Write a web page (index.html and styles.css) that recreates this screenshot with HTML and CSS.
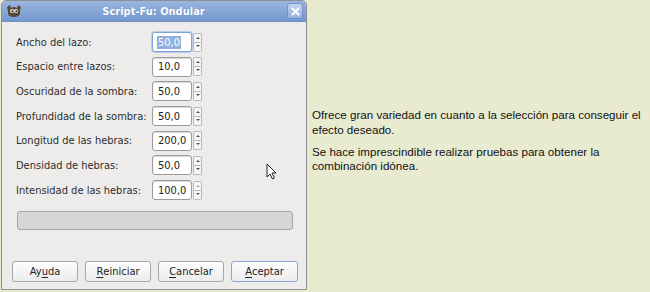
FILE: index.html
```html
<!DOCTYPE html>
<html>
<head>
<meta charset="utf-8">
<link rel="stylesheet" href="styles.css">
</head>
<body>
<div class="page">
  <div class="window">
    <div class="titlebar">
      <svg class="appicon" width="16" height="13" viewBox="0 0 16 13">
        <path d="M1 2 L4 0 L5 3 Q8 1 11 3 L12 0 L15 2 L14 6 Q15 12 8 12 Q1 12 2 6 Z" fill="#5b4a38"/>
        <circle cx="6" cy="6" r="2" fill="#e8e8e8"/>
        <circle cx="10" cy="6" r="2" fill="#e8e8e8"/>
        <circle cx="6.3" cy="6.2" r="0.9" fill="#222"/>
        <circle cx="10.3" cy="6.2" r="0.9" fill="#222"/>
      </svg>
      <div class="title">Script-Fu: Ondular</div>
      <div class="close">
        <svg width="9" height="9" viewBox="0 0 9 9"><path d="M1.5 1.5 L7.5 7.5 M7.5 1.5 L1.5 7.5" stroke="#fff" stroke-width="2" stroke-linecap="round"/></svg>
      </div>
    </div>
    <div class="body">
      <div class="form">
        <div class="row"><span class="label">Ancho del lazo:</span><div class="spin"><div class="entry focus"><span class="sel">50,0</span></div><div class="arrows"><span class="up"></span><span class="down"></span></div></div></div>
        <div class="row"><span class="label">Espacio entre lazos:</span><div class="spin"><div class="entry">10,0</div><div class="arrows"><span class="up"></span><span class="down"></span></div></div></div>
        <div class="row"><span class="label">Oscuridad de la sombra:</span><div class="spin"><div class="entry">50,0</div><div class="arrows"><span class="up"></span><span class="down"></span></div></div></div>
        <div class="row"><span class="label">Profundidad de la sombra:</span><div class="spin"><div class="entry">50,0</div><div class="arrows"><span class="up"></span><span class="down"></span></div></div></div>
        <div class="row"><span class="label">Longitud de las hebras:</span><div class="spin"><div class="entry">200,0</div><div class="arrows"><span class="up"></span><span class="down"></span></div></div></div>
        <div class="row"><span class="label">Densidad de hebras:</span><div class="spin"><div class="entry">50,0</div><div class="arrows"><span class="up"></span><span class="down"></span></div></div></div>
        <div class="row"><span class="label">Intensidad de las hebras:</span><div class="spin"><div class="entry">100,0</div><div class="arrows"><span class="up dim"></span><span class="down"></span></div></div></div>
      </div>
      <div class="progress"></div>
      <div class="buttons">
        <div class="btn">Ay<u>u</u>da</div>
        <div class="btn"><u>R</u>einiciar</div>
        <div class="btn"><u>C</u>ancelar</div>
        <div class="btn default"><u>A</u>ceptar</div>
      </div>
      <svg class="cursor" width="12" height="18" viewBox="0 0 12 18">
        <path d="M1 1 L1 14 L4 11 L6.5 16 L8.5 15 L6 10 L10 10 Z" fill="#fff" stroke="#222" stroke-width="1" stroke-linejoin="round"/>
      </svg>
    </div>
  </div>
  <div class="side">
    <p>Ofrece gran variedad en cuanto a la selección para conseguir el efecto deseado.</p>
    <p>Se hace imprescindible realizar pruebas para obtener la combinación idónea.</p>
  </div>
</div>
</body>
</html>
```

FILE: styles.css
```css
html, body {
  margin: 0;
  padding: 0;
  background: #e9ebd1;
}
.page {
  display: flex;
  width: 650px;
  height: 292px;
}
.window {
  width: 306px;
  height: 290px;
  flex: none;
  margin-left: 1px;
  border: 1px solid #8d8f93;
  border-top-left-radius: 5px;
  border-top-right-radius: 5px;
  background: #edeceb;
  display: flex;
  flex-direction: column;
  overflow: hidden;
  box-sizing: border-box;
  font-family: "DejaVu Sans Condensed", "DejaVu Sans", sans-serif;
  font-stretch: condensed;
  font-size: 11px;
  color: #2e2e2e;
}
.titlebar {
  height: 20px;
  flex: none;
  background: linear-gradient(#9ab6df, #7498cf);
  display: flex;
  align-items: center;
  position: relative;
  border-bottom: 1px solid #6f8fbf;
}
.appicon {
  margin-left: 4px;
  flex: none;
}
.title {
  flex: 1;
  text-align: center;
  color: #fff;
  font-weight: bold;
  font-size: 11px;
  margin-right: 2px;
  text-shadow: 0 0 1px #5c7db3;
}
.close {
  width: 14px;
  height: 14px;
  margin-right: 3px;
  border: 1px solid #7193c9;
  border-radius: 3px;
  background: linear-gradient(#c3d4ee, #98b3df);
  display: flex;
  align-items: center;
  justify-content: center;
}
.body {
  flex: 1;
  position: relative;
  padding: 0 8px 0 8px;
  display: flex;
  flex-direction: column;
}
.form {
  margin-top: 10px;
  margin-left: 6px;
  display: flex;
  flex-direction: column;
  gap: 4.7px;
}
.row {
  display: flex;
  align-items: center;
  height: 20px;
}
.label {
  width: 136px;
  flex: none;
  white-space: nowrap;
}
.spin {
  display: flex;
  align-items: center;
}
.entry {
  width: 40px;
  height: 20px;
  box-sizing: border-box;
  border: 1px solid #9b9b9b;
  border-radius: 3px;
  background: #fff;
  box-shadow: inset 0 1px 1px #d8d8d8;
  padding-left: 5px;
  display: flex;
  align-items: center;
  font-size: 11px;
  color: #222;
  white-space: nowrap;
}
.entry.focus {
  border-color: #7fa3d6;
  box-shadow: 0 0 0 1px #b9cdea;
}
.sel {
  background: #8fb0dd;
  color: #fff;
  padding: 0 1px;
  margin-left: -1px;
}
.arrows {
  margin-left: 1px;
  width: 9px;
  height: 19px;
  display: flex;
  flex-direction: column;
}
.arrows span {
  flex: 1;
  border: 1px solid #b8b8b8;
  background: #f6f6f6;
  position: relative;
}
.arrows .up {
  border-radius: 2px 2px 0 0;
}
.arrows .down {
  border-top: none;
  border-radius: 0 0 2px 2px;
}
.arrows span::after {
  content: "";
  position: absolute;
  left: 1.5px;
  top: 3px;
  width: 0;
  height: 0;
  border-left: 2px solid transparent;
  border-right: 2px solid transparent;
}
.arrows .up::after {
  border-bottom: 2px solid #555;
}
.arrows .down::after {
  top: 2px;
  border-top: 2px solid #555;
}
.arrows .up.dim::after {
  border-bottom-color: #aaa;
}
.progress {
  margin-top: 11px;
  margin-left: 7px;
  width: 276px;
  height: 19px;
  border: 1px solid #a5a5a5;
  border-radius: 3px;
  background: #d6d6d5;
  box-sizing: border-box;
}
.buttons {
  margin-top: auto;
  margin-bottom: 7px;
  margin-left: 2px;
  display: flex;
  gap: 7px;
}
.btn {
  width: 66px;
  height: 21px;
  box-sizing: border-box;
  border: 1px solid #a6a6a6;
  border-radius: 3px;
  background: linear-gradient(#fdfdfd, #ececec);
  display: flex;
  align-items: center;
  justify-content: center;
  font-size: 11px;
  color: #222;
}
.btn.default {
  border-color: #88a7d8;
  width: 67px;
}
.btn u {
  text-decoration-thickness: 1px;
  text-underline-offset: 2px;
}
.cursor {
  position: absolute;
  left: 264px;
  top: 141px;
}
.side {
  flex: 1;
  padding-left: 5px;
  padding-top: 108px;
  font-family: "Liberation Sans", Arial, sans-serif;
  font-size: 11.6px;
  line-height: 14.5px;
  color: #111;
}
.side p {
  margin: 0 0 7.5px 0;
}
```
